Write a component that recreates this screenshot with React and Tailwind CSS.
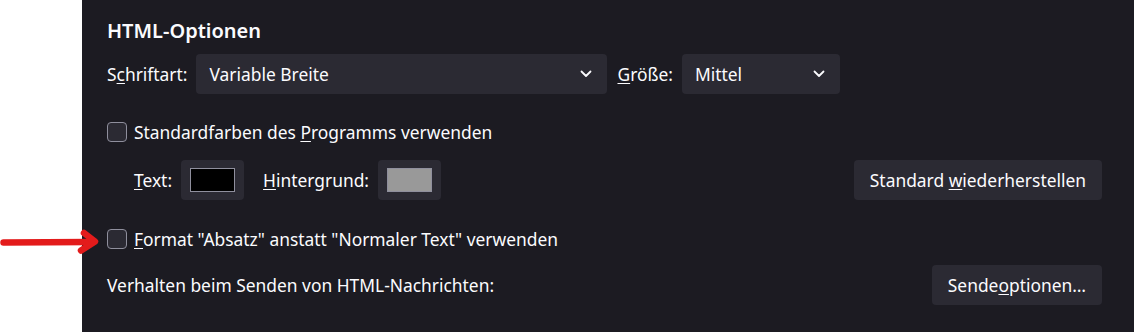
// Thunderbird-style HTML options panel (dark theme)
const font = { fontFamily: '"Noto Sans", "Open Sans", sans-serif' };

const Chevron = () => (
  <svg width="12" height="8" viewBox="0 0 12 8" className="shrink-0">
    <path d="M1.5 1.5 L6 6 L10.5 1.5" fill="none" stroke="#fbfbfe" strokeWidth="1.8" strokeLinecap="round" strokeLinejoin="round" />
  </svg>
);

const Select = ({ value, width }) => (
  <div className={`${width} h-10 flex items-center justify-between pl-[13px] pr-[15px] rounded-[4px] bg-[#2b2a33]`}>
    <span>{value}</span>
    <Chevron />
  </div>
);

const Checkbox = () => (
  <div className="w-5 h-5 shrink-0 rounded-[4px] border border-[#8f8f9d] bg-[#2b2a33]" />
);

const Swatch = ({ color }) => (
  <div className="w-[63px] h-10 flex items-center justify-center rounded-[4px] bg-[#2b2a33]">
    <div className={`w-[45px] h-[24px] border border-[#8f8f9d] ${color}`} />
  </div>
);

const Button = ({ children }) => (
  <button className="h-10 px-4 rounded-[4px] bg-[#2b2a33] text-[#fbfbfe]">{children}</button>
);

const Arrow = () => (
  <svg width="100" height="26" viewBox="0 0 100 26" className="absolute left-0 top-[229px]">
    <path d="M3.5 13.5 L90 13" stroke="#e31b1b" strokeWidth="6.5" strokeLinecap="round" fill="none" />
    <path d="M84 4 L95 12.5 L81 21.5" stroke="#e31b1b" strokeWidth="6.5" strokeLinecap="round" strokeLinejoin="round" fill="none" />
  </svg>
);

export default function App() {
  return (
    <div className="relative w-[1134px] h-[332px] flex bg-white text-[17.4px] leading-6 text-[#fbfbfe]" style={font}>
      <div className="w-[82px] shrink-0 bg-white" />
      <div className="flex-1 bg-[#1c1b22] pl-[25px] pr-[32px] pt-[18px]">
        <h2 className="h-[26px] leading-[26px] text-[20px] font-semibold">HTML-Optionen</h2>

        <div className="mt-[10px] flex items-center h-10">
          <span className="mr-[9px]">S<u className="underline-offset-2">c</u>hriftart:</span>
          <Select value="Variable Breite" width="w-[411px]" />
          <span className="ml-[10px] mr-[9px]"><u className="underline-offset-2">G</u>röße:</span>
          <Select value="Mittel" width="w-[158px]" />
        </div>

        <div className="mt-[28px] flex items-center h-5 gap-[7px]">
          <Checkbox />
          <span>Standardfarben des <u className="underline-offset-2">P</u>rogramms verwenden</span>
        </div>

        <div className="mt-[18px] flex items-center h-10 pl-[27px]">
          <span className="mr-[9px]"><u className="underline-offset-2">T</u>ext:</span>
          <Swatch color="bg-black" />
          <span className="ml-[19px] mr-[9px]"><u className="underline-offset-2">H</u>intergrund:</span>
          <Swatch color="bg-[#999999]" />
          <div className="flex-1" />
          <Button>Standard <u className="underline-offset-2">w</u>iederherstellen</Button>
        </div>

        <div className="mt-[29px] flex items-center h-5 gap-[7px]">
          <Checkbox />
          <span><u className="underline-offset-2">F</u>ormat "Absatz" anstatt "Normaler Text" verwenden</span>
        </div>

        <div className="mt-[16px] flex items-center justify-between h-10">
          <span>Verhalten beim Senden von HTML-Nachrichten:</span>
          <Button>Sende<u className="underline-offset-2">o</u>ptionen…</Button>
        </div>
      </div>
      <Arrow />
    </div>
  );
}
